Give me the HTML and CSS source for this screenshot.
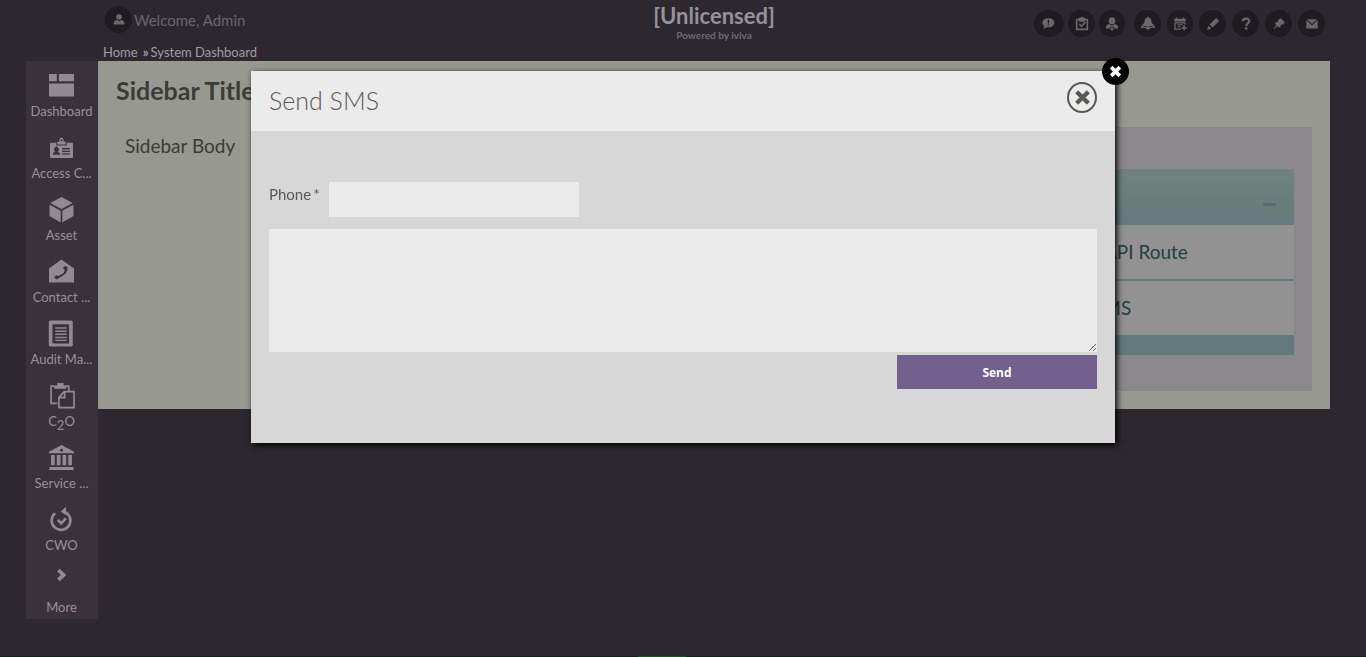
FILE: index.html
```html
<!DOCTYPE html>
<html lang="en">
<head>
<meta charset="utf-8">
<title>System Dashboard</title>
<link rel="stylesheet" href="styles.css">
</head>
<body>
<div class="app">
  <header class="topbar">
    <div class="account">
      <a class="user" href="#">
        <span class="round"><svg class="glyph" viewBox="0 0 16 16"><circle cx="8" cy="4.500" r="3.200"/><path d="M1.800 13q0-5 4-5l2.200 1.500L10.200 8q4 0 4 5z"/></svg></span>
        <span>Welcome, Admin</span>
      </a>
      <nav class="crumbs" aria-label="Breadcrumb"><a href="#">Home</a><span class="crumb-sep">»</span><a href="#">System Dashboard</a></nav>
    </div>
    <div class="brand">
      <div class="brand-name">[Unlicensed]</div>
      <div class="brand-by">Powered by iviva</div>
    </div>
    <div class="tools">
      <div class="tool-group tool-group-tight">
        <button class="round round-wide" aria-label="Messages"><svg class="glyph glyph-back" viewBox="0 0 16 16"><path fill-rule="evenodd" d="M8.500 1.500c3.900 0 6.700 2.100 6.700 5s-2.800 5.200-6.700 5.200l-1.500-.1-4.200 2.200 1-3.500C2.300 9.400 1.700 8 1.700 6.500c0-2.900 2.900-5 6.800-5zM7.500 3l.4 4.500h1.200L9.500 3zm.2 5.500V10h1.600V8.500z"/></svg></button>
        <button class="round" aria-label="Tasks"><svg class="glyph" viewBox="0 0 16 16"><path fill-rule="evenodd" d="M1 2h3.500V.8h2L8-.5 9.500.8h2V2H15v13H1zm1.800 1.800v9.400h10.400V3.800h-1.700v1.500h-7V3.800z"/><path d="M5 8 7.500 10.700 12 5.800" fill="none" stroke="currentColor" stroke-width="1.800"/></svg></button>
        <button class="round round-small" aria-label="Requests"><svg class="glyph" viewBox="0 0 16 16"><ellipse cx="8" cy="4.300" rx="3.700" ry="4"/><path d="M1 13q0-4.500 4-5l3 2 3-2q4 .5 4 5h-4L9.700 11H6.300L5 13z"/><path d="M6.900 12h2.200l.9 1.500L9 15.500H7l-1-2z"/></svg></button>
      </div>
      <div class="tool-group">
        <button class="round" aria-label="Alerts"><svg class="glyph" viewBox="0 0 16 16"><path d="M7 .5 8-.5l1 1c2.500.7 3 3 3.200 6L15.800 10.500v2H10.500q-.5 2-2.500 2t-2.500-2H.2v-2L3.800 6.500c.2-3 .7-5.300 3.200-6z"/><path d="M2.500 11h4.800M8.700 11h4.800" stroke="#1f1b20"/></svg></button>
        <button class="round round-small" aria-label="Calendar"><svg class="glyph" viewBox="0 0 16 16"><path fill-rule="evenodd" d="M1.500 2h2V.5H5V2h6V.5h1.500V2h2v3h-13zm0 4h13v2.500H13V7.300H3V13h6v1.500H1.500zM5 8.200h6v1.200H5zm0 2.300h3.500v1.200H5z"/><path d="M12.700 9.500v6M9.700 12.500h6" stroke="currentColor" stroke-width="1.800"/></svg></button>
        <button class="round" aria-label="Edit"><svg class="glyph" viewBox="0 0 16 16"><path d="M11.500 1 15 4.500 7.500 12 4 8.500zM3 10l3 3-3.500 1.500H1.500v-1z"/></svg></button>
        <button class="round" aria-label="Help"><svg class="glyph" viewBox="0 0 16 16"><path d="M4.300 4.800C4.400.8 11.700.7 11.700 4.800c0 2.600-3.500 2.400-3.500 5.400" fill="none" stroke="currentColor" stroke-width="2.600"/><circle cx="8.200" cy="13" r="1.600"/></svg></button>
        <button class="round" aria-label="Pins"><svg class="glyph" viewBox="0 0 16 16"><path d="m10 1.500 4.500 4.500-1.500 2.500-2.700.4-.8 2.800-1.500.3-1.700-1.700L2.500 13.800l-.8-.7 3.500-3.800L3.500 7.700 4 6.200l2.800-.7.7-2.700z"/></svg></button>
        <button class="round" aria-label="Mail"><svg class="glyph" viewBox="0 0 16 16"><path d="M2.300 2.500h11.400L8 8zM1.500 3.500 8 9.800l6.500-6.300V13h-13z"/></svg></button>
      </div>
    </div>
  </header>

  <nav class="sidenav" aria-label="Modules">
    <a class="nav-item" href="#"><svg class="nav-icon" viewBox="0 0 24 24"><path d="M0 1h7.500v7H0zM9.500 1H24v7H9.500zM0 10h24v12.500H0z"/></svg><span>Dashboard</span></a>
    <a class="nav-item" href="#"><svg class="nav-icon" viewBox="0 0 24 24"><path fill-rule="evenodd" d="M10 6.500V5q0-2.500 2-2.500T14 5v1.500h2V9H8V6.500zM12 4a1 1 0 1 0 .1 0z"/><path fill-rule="evenodd" d="M1 8.500q0-1 1-1h5V10h10V7.500h5q1 0 1 1V21q0 1-1 1H2q-1 0-1-1zM3.500 19h7.300q0-2.500-2.500-3a2.200 2.500 0 1 0-2.300 0Q3.500 16.500 3.500 19zM12.500 12.500v1.300H20v-1.300zm0 2.500v1.300H20V15zm0 2.500v1.300H20v-1.300z"/></svg><span>Access C...</span></a>
    <a class="nav-item" href="#"><svg class="nav-icon" viewBox="0 0 24 24"><path d="M12 0l10.800 5.800L12 11.600 1.200 5.800zM.5 7.500 11.200 13.200V24.500L.5 18.300zM23.500 7.500 12.800 13.200V24.500l10.700-6.200z"/></svg><span>Asset</span></a>
    <a class="nav-item" href="#"><svg class="nav-icon" viewBox="0 0 24 24"><path d="M12 .5 24 9v13.500H0V9z"/><path fill="none" stroke="#3a323a" stroke-width="1.800" d="M16.300 8q2 6-9.300 10"/><path fill="#3a323a" d="m13.500 8.500 2.200-2 2 1.500-.2 3.500-2.500-.5zM5 17l2.500-1.500 2.500 1.700-1.500 2q-3 .8-3.500-2.200z"/></svg><span>Contact ...</span></a>
    <a class="nav-item" href="#"><svg class="nav-icon" viewBox="0 0 24 24"><path fill-rule="evenodd" d="M1.500-.5H21q1.800 0 1.800 1.500v22q0 1.500-1.800 1.500H1.500Q-.2 24.500-.2 23V1Q-.2-.5 1.500-.5zM3.300 3v18.500h16V3zM6 6h11v1.500H6zm0 3h11v1.500H6zm0 3h11v1.500H6zm0 3h11v1.500H6zm0 3h11v1.200H6z"/></svg><span>Audit Ma...</span></a>
    <a class="nav-item" href="#"><svg class="nav-icon" viewBox="0 0 24 24"><g fill="none" stroke="currentColor" stroke-width="1.600"><path d="M5 3H2v16.500h6M16 3h3v5"/><path d="M9.500 14 14.500 8.300H24V23.700H9.500zM15 8.500V14H10"/></g><path d="M5 2.500h3V0h6v2.500h2.500v3H5z"/></svg><span>C<sub>2</sub>O</span></a>
    <a class="nav-item" href="#"><svg class="nav-icon" viewBox="0 0 24 24"><path fill-rule="evenodd" d="M12 0l12 6.500V8H0V6.500zm0 3.500a1.500 1.500 0 1 0 .1 0z"/><path d="M2 9.500h3.500v10H2zM7.500 9.500H11v10H7.500zM13 9.500h3.500v10H13zM18.500 9.500H22v10h-3.500zM.8 21h22.400l.8 3H0z"/></svg><span>Service ...</span></a>
    <a class="nav-item" href="#"><svg class="nav-icon" viewBox="0 0 24 24"><path d="M5.800 6A9 9 0 1 0 14 4.300" fill="none" stroke="currentColor" stroke-width="2.500"/><path d="m11.300 4.300 5-4.500v8z"/><path d="m8.500 12.500 3.200 3.200 4.500-4.800" fill="none" stroke="currentColor" stroke-width="2.500"/></svg><span>CWO</span></a>
    <a class="nav-item" href="#"><svg class="nav-icon" viewBox="0 0 24 24"><path d="m9 1 5 4.700-5 4.700" fill="none" stroke="currentColor" stroke-width="3.600"/></svg><span>More</span></a>
  </nav>

  <main class="content">
    <aside class="side">
      <h2 class="side-title">Sidebar Title</h2>
      <p class="side-body">Sidebar Body</p>
    </aside>
    <section class="panel">
      <div class="widget">
        <div class="widget-head"><button class="collapse" aria-label="Collapse"></button></div>
        <a class="row" href="#"><span class="row-name">API Route</span></a>
        <a class="row" href="#"><span class="row-name row-name-wide">SMS</span></a>
      </div>
    </section>
  </main>
</div>

<div class="statusbar"><div class="status-mark"></div></div>

<div class="overlay">
  <div class="modal" role="dialog" aria-labelledby="modal-title">
    <button class="modal-dismiss" aria-label="Dismiss"><svg viewBox="0 0 12 12"><path d="m2 2 8 8M10 2l-8 8" stroke="currentColor" stroke-width="3.400"/></svg></button>
    <div class="modal-head">
      <h1 class="modal-title" id="modal-title">Send SMS</h1>
      <button class="modal-close" aria-label="Close"><svg viewBox="0 0 16 16"><path d="m2.500 2.500 11 11M13.500 2.500l-11 11" stroke="currentColor" stroke-width="4"/></svg></button>
    </div>
    <form class="modal-body">
      <div class="field">
        <label for="phone">Phone<span class="required">*</span></label>
        <input id="phone" type="text">
      </div>
      <textarea class="message" aria-label="Message"></textarea>
      <button class="send" type="button">Send</button>
    </form>
  </div>
</div>
</body>
</html>
```
FILE: styles.css
```css
* { box-sizing: border-box; }
body {
  margin: 0;
  min-height: 100vh;
  background: #2d282f;
  font-family: Lato, "Liberation Sans", sans-serif;
  font-size: 13px;
  overflow: hidden;
}
a { color: inherit; text-decoration: none; }
button { border: 0; padding: 0; font: inherit; color: inherit; cursor: pointer; }
svg { display: block; fill: currentColor; }

.app {
  display: grid;
  grid-template-columns: 72px 1fr;
  align-items: start;
  padding: 0 36px 0 26px;
}

/* Top bar */
.topbar {
  grid-column: 2;
  display: grid;
  grid-template-columns: 1fr auto 1fr;
  align-items: start;
  height: 61px;
}
.account { padding: 6px 0 0 5px; }
.user {
  display: flex;
  align-items: center;
  gap: 2px;
  padding-left: 2px;
  color: #6b656d;
  font-size: 15px;
}
.round {
  display: grid;
  place-items: center;
  width: 27px;
  height: 27px;
  border-radius: 50%;
  background: #1f1b20;
  color: #6b676b;
}
.round-wide { width: 30px; }
.round-small { width: 26px; }
.glyph { width: 14px; height: 14px; overflow: visible; }
.glyph-back { margin-right: 2px; }
.crumbs {
  display: flex;
  padding-top: 10px;
  color: #a19da1;
  font-size: 13px;
  line-height: 18px;
}
.crumb-sep { margin: 0 2px 0 5px; font-weight: 700; }
.brand { padding-top: 3px; text-align: center; }
.brand-name {
  color: #969396;
  font-size: 22px;
  font-weight: 700;
  line-height: 26px;
}
.brand-by {
  color: #6f6b6f;
  font-size: 10px;
  font-weight: 700;
  line-height: 12px;
}
.tools {
  display: flex;
  justify-content: flex-end;
  gap: 9px;
  padding: 10px 5px 0 0;
}
.tool-group { display: flex; gap: 6px; }
.tool-group-tight { gap: 4px; }

/* Module navigation */
.sidenav { background: #3a323a; color: #989097; }
.nav-item {
  display: flex;
  flex-direction: column;
  align-items: center;
  gap: 5px;
  height: 62px;
  padding: 12px 1px 0 0;
  line-height: 16px;
  white-space: nowrap;
}
.nav-icon { width: 25px; height: 25px; color: #928a92; overflow: visible; }
.nav-item sub { font-size: 13px; line-height: 0; }

/* Page content */
.content {
  display: grid;
  grid-template-columns: 1fr 3fr;
  min-height: 348px;
  padding: 17px 18px 18px;
  background: #979890;
}
.side-title {
  margin: 0;
  color: #3c3c36;
  font-size: 25px;
  line-height: 24px;
}
.side-body {
  margin: 0;
  padding: 32px 9px;
  color: #3c3c36;
  font-size: 19px;
  line-height: 24px;
}
.panel {
  margin-top: 49px;
  padding: 42px 18px 36px;
  background: #8b888b;
}
.widget { border-bottom: 20px solid #627a7a; }
.widget-head {
  display: flex;
  justify-content: flex-end;
  align-items: center;
  height: 56px;
  padding: 14px 18px 0;
  background: linear-gradient(#6f8381, #697e7a 60%, #647a7e);
}
.collapse { width: 13px; height: 3px; background: #536e6c; }
.row {
  display: flex;
  justify-content: flex-end;
  align-items: center;
  height: 54px;
  padding-bottom: 2px;
  background: #929292;
  color: #243f40;
  font-size: 19px;
}
.row + .row { height: 56px; border-top: 2px solid #627a7a; }
.row-name { width: 190px; }
.row-name-wide { width: 201px; }

/* Status line */
.statusbar {
  position: fixed;
  inset: auto 0 0;
  display: flex;
  justify-content: center;
  height: 1px;
  padding-right: 42px;
  background: #0d2411;
}
.status-mark { width: 48px; background: #0d5a14; }

/* Dialog */
.overlay {
  position: fixed;
  inset: 0;
  display: flex;
  justify-content: center;
  align-items: flex-start;
  padding: 71px 20px 0;
}
.modal {
  position: relative;
  width: 100%;
  max-width: 864px;
  background: #d7d7d7;
  color: #5a5852;
  box-shadow: 2px 2px 6px #000;
}
.modal-dismiss {
  position: absolute;
  top: -13px;
  right: -14px;
  display: grid;
  place-items: center;
  width: 27px;
  height: 27px;
  border-radius: 50%;
  background: #000;
  color: #fff;
}
.modal-dismiss svg { width: 13px; height: 13px; }
.modal-head {
  display: flex;
  justify-content: space-between;
  align-items: center;
  height: 60px;
  padding: 0 18px 2px;
  background: #ebebeb;
}
.modal-title {
  margin: 0;
  font-size: 25px;
  font-weight: 300;
}
.modal-close {
  display: grid;
  place-items: center;
  width: 30px;
  height: 31px;
  margin-bottom: 6px;
  border: 2px solid #5a5852;
  border-radius: 50%;
  background: none;
}
.modal-close svg { width: 17px; height: 17px; }
.modal-body {
  display: flex;
  flex-direction: column;
  padding: 51px 18px 54px;
}
.field { display: flex; margin-bottom: 12px; }
.field label {
  width: 60px;
  padding-top: 3px;
  font-size: 15px;
  line-height: 18px;
}
.required { padding-left: 2px; }
.field input {
  width: 250px;
  height: 35px;
  padding: 0 8px;
  border: 0;
  background: #ebebeb;
  font: inherit;
}
.message {
  width: 100%;
  height: 123px;
  margin-bottom: 3px;
  padding: 8px;
  border: 0;
  background: #ebebeb;
  font: inherit;
  resize: both;
}
.send {
  align-self: flex-end;
  width: 200px;
  height: 34px;
  background: #73608c;
  color: #fff;
  font-family: "Open Sans", "Liberation Sans", sans-serif;
  font-size: 12px;
  font-weight: 700;
}
```
